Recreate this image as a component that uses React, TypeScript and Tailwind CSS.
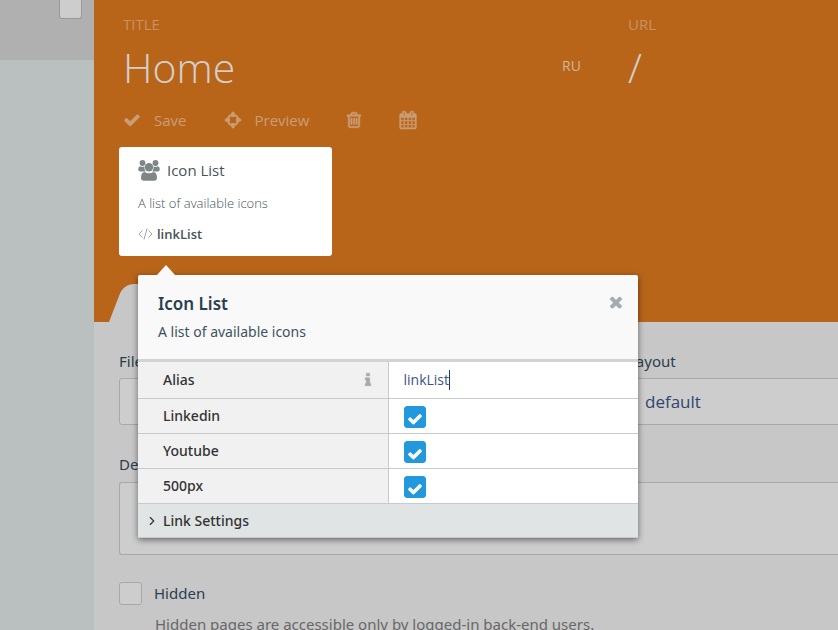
import React, { useState } from 'react';
import { ChevronRight } from 'lucide-react';

const CHECK =
  'M1671 566q0 40-28 68l-724 724-136 136q-28 28-68 28t-68-28l-136-136-362-362q-28-28-28-68t28-68l136-136q28-28 68-28t68 28l294 295 656-657q28-28 68-28t68 28l136 136q28 28 28 68z';
const TIMES =
  'M1490 1322q0 40-28 68l-136 136q-28 28-68 28t-68-28l-294-294-294 294q-28 28-68 28t-68-28l-136-136q-28-28-28-68t28-68l294-294-294-294q-28-28-28-68t28-68l136-136q28-28 68-28t68 28l294 294 294-294q28-28 68-28t68 28l136 136q28 28 28 68t-28 68l-294 294 294 294q28 28 28 68z';
const TRASH =
  'M704 736v576q0 14-9 23t-23 9h-64q-14 0-23-9t-9-23v-576q0-14 9-23t23-9h64q14 0 23 9t9 23zm256 0v576q0 14-9 23t-23 9h-64q-14 0-23-9t-9-23v-576q0-14 9-23t23-9h64q14 0 23 9t9 23zm256 0v576q0 14-9 23t-23 9h-64q-14 0-23-9t-9-23v-576q0-14 9-23t23-9h64q14 0 23 9t9 23zm128 724v-948h-896v948q0 22 7 40.5t14.5 27 10.5 8.5h832q3 0 10.5-8.5t14.5-27 7-40.5zm-672-1076h448l-48-117q-7-9-17-11h-317q-10 2-17 11zm928 32v64q0 14-9 23t-23 9h-96v948q0 83-47 143.5t-113 60.5h-832q-66 0-113-58.5t-47-141.5v-952h-96q-14 0-23-9t-9-23v-64q0-14 9-23t23-9h309l70-167q15-37 54-63t79-26h320q40 0 79 26t54 63l70 167h309q14 0 23 9t9 23z';
const CALENDAR =
  'M192 1664h288v-288h-288v288zm352 0h320v-288h-320v288zm-352-352h288v-320h-288v320zm352 0h320v-320h-320v320zm-352-384h288v-288h-288v288zm736 736h320v-288h-320v288zm-384-736h320v-288h-320v288zm768 736h288v-288h-288v288zm-384-352h320v-320h-320v320zm-352-864v-288q0-13-9.5-22.5t-22.5-9.5h-64q-13 0-22.5 9.5t-9.5 22.5v288q0 13 9.5 22.5t22.5 9.5h64q13 0 22.5-9.5t9.5-22.5zm736 864h288v-320h-288v320zm-384-384h320v-288h-320v288zm384 0h288v-288h-288v288zm32-480v-288q0-13-9.5-22.5t-22.5-9.5h-64q-13 0-22.5 9.5t-9.5 22.5v288q0 13 9.5 22.5t22.5 9.5h64q13 0 22.5-9.5t9.5-22.5zm384-64v1280q0 52-38 90t-90 38h-1408q-52 0-90-38t-38-90v-1280q0-52 38-90t90-38h128v-96q0-66 47-113t113-47h64q66 0 113 47t47 113v96h384v-96q0-66 47-113t113-47h64q66 0 113 47t47 113v96h128q52 0 90 38t38 90z';
const INFO =
  'M1216 1344v128q0 26-19 45t-45 19h-512q-26 0-45-19t-19-45v-128q0-26 19-45t45-19h64v-384h-64q-26 0-45-19t-19-45v-128q0-26 19-45t45-19h384q26 0 45 19t19 45v576h64q26 0 45 19t19 45zm-128-1152v192q0 26-19 45t-45 19h-256q-26 0-45-19t-19-45v-192q0-26 19-45t45-19h256q26 0 45 19t19 45z';

const Glyph: React.FC<{ d: string; className: string; stroke?: number }> = ({ d, className, stroke = 0 }) => (
  <svg
    viewBox="0 0 1792 1792"
    fill="currentColor"
    stroke="currentColor"
    strokeWidth={stroke}
    className={className}
    overflow="visible"
    aria-hidden="true"
  >
    <path d={d} />
  </svg>
);

const CrosshairsIcon = () => (
  <svg viewBox="0 0 18 18" className="h-[18px] w-[18px]" aria-hidden="true">
    <circle cx="9" cy="9" r="5.2" fill="none" stroke="currentColor" strokeWidth="2" />
    <path
      fill="currentColor"
      d="M9 .3l1.800 1.700V6H7.200V2zM9 17.700l1.800-1.700v-4H7.200v4zM.3 9L2 7.200h4v3.600H2zM17.700 9L16 7.200h-4v3.600h4z"
    />
  </svg>
);

const UsersIcon = () => (
  <svg viewBox="0 0 22 21" fill="currentColor" className="h-[21px] w-[22px]" aria-hidden="true">
    <circle cx="4.500" cy="3" r="2.900" />
    <circle cx="17.500" cy="3" r="2.900" />
    <path d="M2 6.200q2.500 1.200 4.500.2-.6 3 1.300 5.100H2.500Q.2 11.500.2 9.500.3 6.500 2 6.200zM20 6.200q-2.500 1.200-4.500.2.6 3-1.300 5.100h5.300q2.300 0 2.300-2-.1-3-1.800-3.300z" />
    <circle cx="11" cy="7.300" r="4.200" />
    <path d="M6.500 12q4.500 2.400 9 0 3.300.4 3.500 5.600 0 3.200-3 3.200H6q-3 0-3-3.200.2-5.200 3.500-5.600z" />
  </svg>
);

const CodeIcon = () => (
  <svg viewBox="0 0 15 12" className="h-3 w-[15px]" fill="none" stroke="currentColor" aria-hidden="true">
    <path d="M4.500 2.500L1 6l3.500 3.500M10.500 2.500L14 6l-3.500 3.500M9 .5L6 11.500" />
  </svg>
);

const networks = ['Linkedin', 'Youtube', '500px'];

const Inspector = () => {
  const [alias, setAlias] = useState('linkList');

  return (
    <div className="absolute top-full left-[19px] z-10 mt-[19px] w-[500px] rounded-[2px] bg-[#f9f9f9] shadow-[0_2px_6px_rgba(0,0,0,0.5)]">
      <svg viewBox="0 0 18 10" className="absolute -top-[10px] left-[19px] h-[10px] w-[18px]" aria-hidden="true">
        <path d="M9 0l9 10H0z" fill="#f9f9f9" />
      </svg>
      <div className="flex h-[87px] items-start justify-between border-b-[3px] border-[#d3d3d3] pt-[17px] pr-[13px] pl-5">
        <div>
          <h2 className="text-[17px] leading-6 font-semibold text-[#2b3e50]">Icon List</h2>
          <p className="mt-1 text-sm leading-6 text-[#405261]">A list of available icons</p>
        </div>
        <button type="button" aria-label="Close" className="mt-px text-[#a0abb3]">
          <Glyph d={TIMES} className="h-[18px] w-[18px]" />
        </button>
      </div>
      <table className="w-full table-fixed border-collapse text-sm text-[#333]">
        <tbody>
          <tr className="h-9 border-b border-[#c5caca]">
            <th scope="row" className="w-[250px] border-r border-[#c5caca] bg-[#f1f1f1] pr-3 pl-[25px] text-left font-medium">
              <div className="flex items-center justify-between">
                <label htmlFor="alias">Alias</label>
                <Glyph d={INFO} stroke={60} className="h-4 w-4 text-[#a8a8a8]" />
              </div>
            </th>
            <td className="bg-white px-[15px]">
              <div className="flex items-center">
                <input
                  id="alias"
                  value={alias}
                  onChange={(e) => setAlias(e.target.value)}
                  className="field-sizing-content font-['Open_Sans',sans-serif] text-[#405386] outline-none"
                />
                <span className="h-5 w-px bg-[#1f3a70]" />
              </div>
            </td>
          </tr>
          {networks.map((name) => (
            <tr key={name} className="h-[35px] border-b border-[#c5caca]">
              <th scope="row" className="border-r border-[#c5caca] bg-[#f1f1f1] pl-[25px] text-left font-medium">
                <label htmlFor={name}>{name}</label>
              </th>
              <td className="bg-white px-[15px]">
                <div className="grid w-[22px] place-items-center pt-[3px]">
                  <input
                    id={name}
                    type="checkbox"
                    defaultChecked
                    className="peer col-start-1 row-start-1 h-[22px] w-[22px] appearance-none rounded-[3px] border border-[#2299dd] checked:bg-[#2299dd]"
                  />
                  <Glyph
                    d={CHECK}
                    className="pointer-events-none invisible col-start-1 row-start-1 mt-[3px] h-4 w-4 text-white peer-checked:visible"
                  />
                </div>
              </td>
            </tr>
          ))}
        </tbody>
      </table>
      <button
        type="button"
        className="flex h-[34px] w-full items-center gap-1 border-b border-[#c5caca] bg-[#e0e4e5] pt-px pl-[7px] text-sm font-medium text-[#333]"
      >
        <ChevronRight className="h-[14px] w-[14px]" />
        Link Settings
      </button>
    </div>
  );
};

const Toolbar = () => (
  <div className="flex h-6 items-center font-['Open_Sans',sans-serif] text-[15px] text-[#cb9d74]">
    <button type="button" className="flex items-center gap-[13px]">
      <Glyph d={CHECK} className="h-[18px] w-[18px]" />
      Save
    </button>
    <button type="button" className="ml-[38px] flex items-center gap-3">
      <CrosshairsIcon />
      Preview
    </button>
    <button type="button" aria-label="Delete" className="ml-9">
      <Glyph d={TRASH} stroke={60} className="h-[18px] w-[18px]" />
    </button>
    <button type="button" aria-label="Schedule" className="ml-9">
      <Glyph d={CALENDAR} stroke={50} className="h-[18px] w-[18px]" />
    </button>
  </div>
);

const labelClass = 'block text-[15px] leading-6 text-[#2b3e50]';
const fieldClass = 'border border-[#a5a9aa] bg-[#cdcdcd] text-[#2f4570] outline-none';
const headLabelClass = "block font-['Open_Sans',sans-serif] text-[15px] leading-5 text-[#c89263]";
const headInputClass =
  "block h-[66px] w-full bg-transparent font-['Open_Sans',sans-serif] text-[41px] font-light text-[#d2cfcc] outline-none";

export default function App() {
  return (
    <div className="flex h-screen overflow-hidden font-['Noto_Sans','Open_Sans',sans-serif]">
      <aside className="w-[94px] shrink-0 bg-[#babfc0]">
        <div className="flex h-[60px] justify-end bg-[#b0b0b0] pr-3">
          <div className="h-[19px] w-[23px] rounded-b-[3px] border border-t-0 border-[#999] bg-[#cdcdcd]" />
        </div>
      </aside>

      <main className="min-w-0 flex-1 bg-[#c7c7c7]">
        <header className="bg-[#b8651a] pt-[14px]">
          <div className="flex pl-[29px]">
            <div className="min-w-0 flex-1">
              <label htmlFor="title" className={headLabelClass}>
                TITLE
              </label>
              <input id="title" defaultValue="Home" className={headInputClass} />
            </div>
            <span className="w-[66px] pt-[42px] font-['Open_Sans',sans-serif] text-sm leading-5 text-[#d0b69d]">
              RU
            </span>
            <div className="w-[210px]">
              <label htmlFor="url" className={headLabelClass}>
                URL
              </label>
              <input id="url" defaultValue="/" className={headInputClass} />
            </div>
          </div>
          <div className="mt-2 pl-[29px]">
            <Toolbar />
          </div>

          <div className="relative mt-[15px] ml-[25px] w-[213px]">
            <section className="h-[109px] rounded-[3px] bg-white px-[19px] pt-[11px] font-['Open_Sans',sans-serif] text-[#46545a]">
              <div className="flex items-center gap-[7px] text-[#7d8788]">
                <UsersIcon />
                <h3 className="text-[15px] leading-6 text-[#46545a]">Icon List</h3>
              </div>
              <p className="mt-[11px] text-[13px] leading-5 font-light">A list of available icons</p>
              <div className="mt-[11px] flex items-center gap-1 text-[#9aa3a5]">
                <CodeIcon />
                <span className="text-[13px] leading-5 font-semibold text-[#46545a]">linkList</span>
              </div>
            </section>
            <Inspector />
          </div>

          <svg viewBox="0 0 120 38" className="mt-7 ml-[15px] block h-[38px] w-[120px]" aria-hidden="true">
            <path d="M0 38L10 12Q14 0 26 0H95Q107 0 111 12L120 38z" fill="#c7c7c7" />
          </svg>
        </header>

        <form className="pt-[27px] pl-[25px]">
          <div className="grid grid-cols-[1fr_210px] gap-5">
            <div>
              <label htmlFor="file" className={labelClass}>
                File Name
              </label>
              <input id="file" className={`${fieldClass} mt-[5px] h-[47px] w-full rounded-[3px] px-4`} />
            </div>
            <div>
              <label htmlFor="layout" className={labelClass}>
                Layout
              </label>
              <select
                id="layout"
                className={`${fieldClass} mt-[5px] h-[47px] w-full appearance-none rounded-l-[3px] border-r-0 px-4 font-['Open_Sans',sans-serif] text-[17px]`}
              >
                <option>default</option>
              </select>
            </div>
          </div>
          <label htmlFor="description" className={`${labelClass} mt-[27px]`}>
            Description
          </label>
          <textarea
            id="description"
            className={`${fieldClass} mt-[6px] block h-[73px] w-full resize-none rounded-l-[3px] border-r-0 p-3`}
          />
          <div className="mt-[26px] flex items-center gap-3">
            <input
              id="hidden"
              type="checkbox"
              className="h-[23px] w-[23px] appearance-none rounded-[3px] border border-[#a5a9aa] bg-[#cdcdcd] checked:bg-[#2299dd]"
            />
            <label htmlFor="hidden" className={labelClass}>
              Hidden
            </label>
          </div>
          <p className="mt-[7px] pl-9 text-[15px] leading-6 text-[#676767]">
            Hidden pages are accessible only by logged-in back-end users.
          </p>
        </form>
      </main>
    </div>
  );
}
